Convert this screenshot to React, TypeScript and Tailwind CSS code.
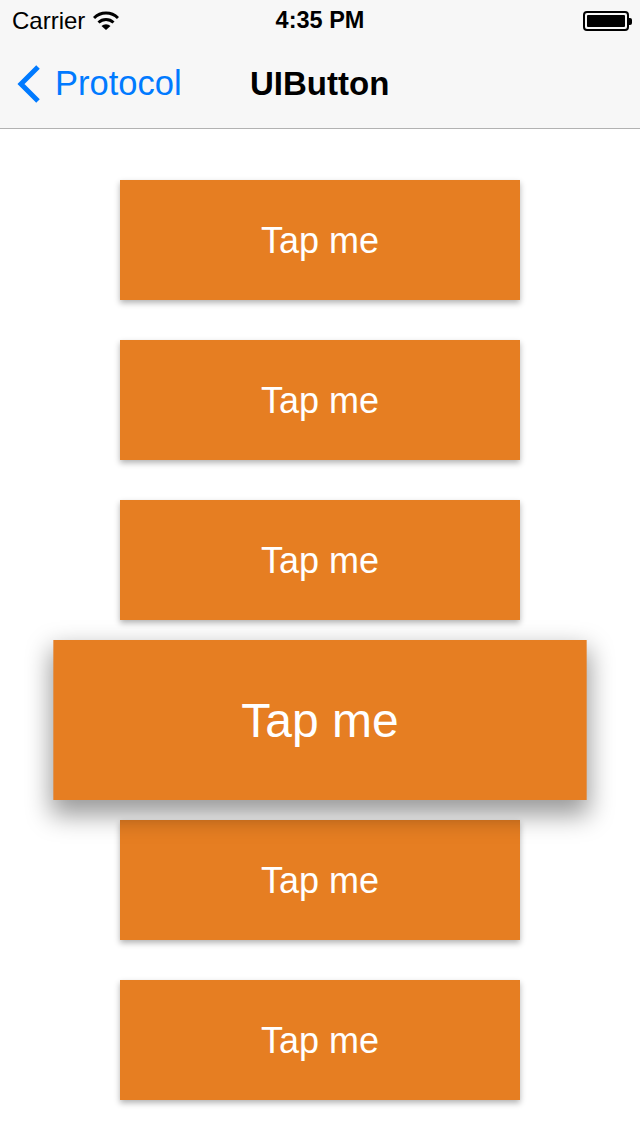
import type { ReactNode } from "react";

const font = { fontFamily: '"Liberation Sans", Arial, sans-serif' };

function WifiIcon() {
  return (
    <svg width="26" height="20" viewBox="0 0 26 20" className="ml-[8px]">
      <path d="M1 7 A17 17 0 0 1 25 7" fill="none" stroke="#000" strokeWidth="3" />
      <path d="M5.5 11.5 A11 11 0 0 1 20.5 11.5" fill="none" stroke="#000" strokeWidth="3" />
      <path d="M13 19 L8.5 15 A6.5 6.5 0 0 1 17.5 15 Z" fill="#000" />
    </svg>
  );
}

function BatteryIcon() {
  return (
    <div className="flex items-center">
      <div className="h-[20px] w-[46px] rounded-[4px] border-[2px] border-black p-[2px]">
        <div className="h-full w-full rounded-[1px] bg-black" />
      </div>
      <div className="h-[7px] w-[3px] rounded-r-[2px] bg-black" />
    </div>
  );
}

function TapButton({ big, children }: { big?: boolean; children: ReactNode }) {
  return (
    <button
      type="button"
      className={`flex h-[120px] w-[400px] shrink-0 items-center justify-center bg-[#e67e22] pt-[2px] text-[36px] text-white ${
        big
          ? "relative z-10 scale-[1.3333] shadow-[0_9px_18px_2px_rgba(0,0,0,0.4)]"
          : "shadow-[0_3px_6px_rgba(0,0,0,0.3)]"
      }`}
    >
      {children}
    </button>
  );
}

export default function App() {
  return (
    <div className="min-h-[1136px] w-[640px] bg-white" style={font}>
      <div className="border-b border-[#b2b2b2] bg-[#f7f7f7]">
        <div className="relative flex h-[40px] items-center px-[12px] pt-[2px]">
          <span className="text-[24px] text-black">Carrier</span>
          <WifiIcon />
          <span className="absolute left-1/2 -translate-x-1/2 text-[23.5px] font-bold text-black">
            4:35 PM
          </span>
          <div className="ml-auto mr-[-4px]">
            <BatteryIcon />
          </div>
        </div>
        <div className="relative flex h-[88px] items-center">
          <div className="flex items-center pl-[16px] text-[#007aff]">
            <svg width="26" height="40" viewBox="0 0 26 40">
              <path d="M22 3 L5 20 L22 37" fill="none" stroke="#007aff" strokeWidth="5" />
            </svg>
            <span className="ml-[13px] text-[34.5px]">Protocol</span>
          </div>
          <span className="absolute left-[250px] text-[33px] font-bold text-black">UIButton</span>
        </div>
      </div>
      <div className="flex flex-col items-center gap-[40px] pt-[51px]">
        <TapButton>Tap me</TapButton>
        <TapButton>Tap me</TapButton>
        <TapButton>Tap me</TapButton>
        <TapButton big>Tap me</TapButton>
        <TapButton>Tap me</TapButton>
        <TapButton>Tap me</TapButton>
      </div>
    </div>
  );
}
